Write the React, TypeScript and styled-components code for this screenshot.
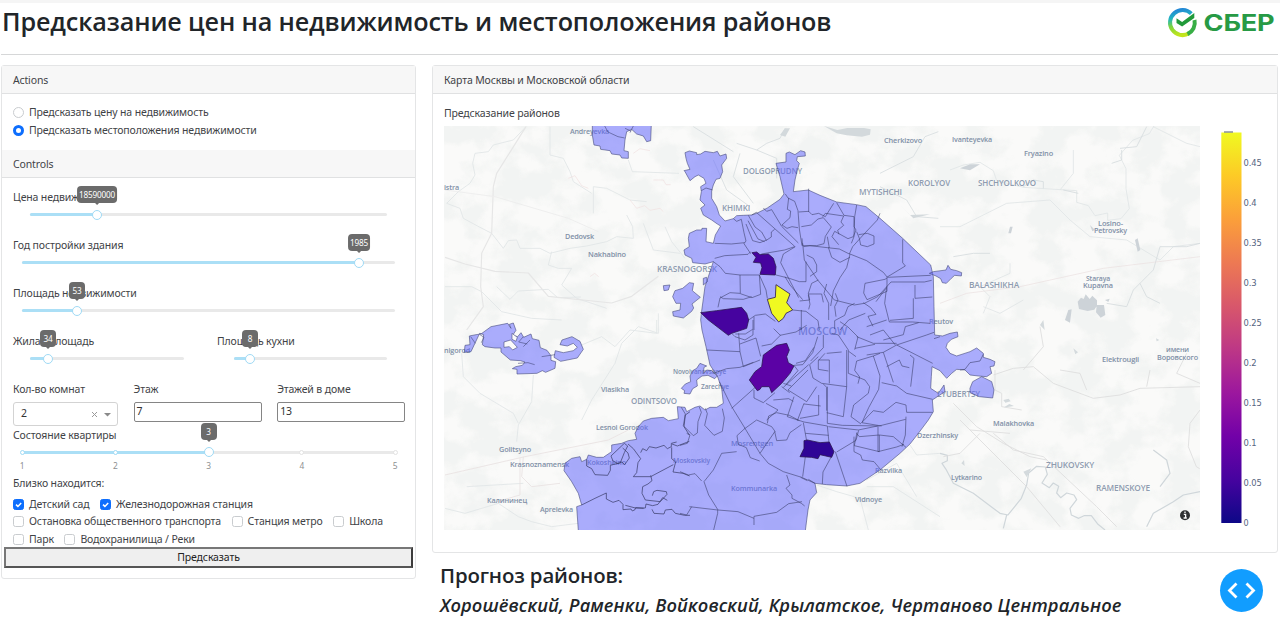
import React from 'react';
import styled, { createGlobalStyle } from 'styled-components';

const GlobalStyle = createGlobalStyle`
  * { box-sizing: border-box; }
  body {
    margin: 0;
    background: #fff;
    color: #3f4347;
    font: 400 10.5px/17px "Noto Sans", "Open Sans", sans-serif;
    letter-spacing: -0.14px;
    overflow: hidden;
  }
  button, input { font: inherit; color: inherit; letter-spacing: inherit; }
`;

const Page = styled.div`
  height: 631px;
  padding: 0 2px 0 1px;
  border-top: 3px solid #f5f5f5;
  display: flex;
  flex-direction: column;
`;
const TopBar = styled.header`
  height: 51.5px;
  flex: none;
  display: flex;
  justify-content: space-between;
  border-bottom: 1px solid #d6d7d8;
`;
const Title = styled.h1`
  margin: 0 0 0 1px;
  color: #212529;
  font-family: "Open Sans", sans-serif;
  font-size: 25.2px;
  font-weight: 600;
  line-height: 37px;
  white-space: nowrap;
`;
const Columns = styled.main`
  display: grid;
  grid-template-columns: 415px 1fr;
  column-gap: 16px;
  padding-top: 10.5px;
`;
const Card = styled.section<{ $h: number }>`
  height: ${p => p.$h}px;
  border: 1px solid #e4e5e6;
  border-radius: 3px;
  background: #fff;
`;
const CardHead = styled.div<{ $flush?: boolean }>`
  height: 28px;
  padding: 6px 11px 4px;
  background: #f7f7f7;
  border-bottom: 1px solid #e0e1e2;
  ${p => p.$flush && 'margin-top: 11px;'}
`;
const Radios = styled.div`
  padding: 10px 11px 0;
`;
const Option = styled.label`
  display: flex;
  align-items: center;
  gap: 5px;
  height: 17.5px;
  white-space: nowrap;
`;
const Radio = styled.span<{ $on?: boolean }>`
  width: 11px;
  height: 11px;
  border-radius: 50%;
  border: ${p => (p.$on ? '3.5px solid #0d6efd' : '1px solid #c9cccf')};
  background: #fff;
`;
const Check = styled.span<{ $on?: boolean }>`
  width: 11px;
  height: 11px;
  display: grid;
  place-items: center;
  border-radius: 2.5px;
  border: 1px solid ${p => (p.$on ? '#0d6efd' : '#c9cccf')};
  background: ${p => (p.$on ? '#0d6efd' : '#fff')};
`;
const Controls = styled.div`
  padding: 11px 11px 0;
`;
const Field = styled.div<{ $h?: number }>`
  height: ${p => p.$h ?? 48}px;
`;
const Pair = styled.div`
  display: grid;
  grid-template-columns: 204px 1fr;
`;
const Rail = styled.div<{ $inset: number; $right?: number }>`
  position: relative;
  height: 3px;
  margin: 7px ${p => p.$right ?? p.$inset}px 0 ${p => p.$inset}px;
  border-radius: 2px;
  background: #e9e9e9;
`;
const Track = styled.div`
  height: 3px;
  border-radius: 2px;
  background: #abdff6;
`;
const Handle = styled.span`
  position: absolute;
  top: -3.5px;
  width: 10px;
  height: 10px;
  margin-left: -5px;
  border: 1.6px solid #9fdaf5;
  border-radius: 50%;
  background: #fff;
`;
const Tip = styled.span`
  position: absolute;
  bottom: 13.5px;
  transform: translateX(-50%);
  min-width: 16px;
  height: 17px;
  padding: 0 2px;
  border-radius: 4px;
  background: #6b6b6b;
  color: #fff;
  font-size: 8.2px;
  line-height: 17px;
  letter-spacing: -0.2px;
  text-align: center;
  &::after {
    content: '';
    position: absolute;
    left: 50%;
    bottom: -2px;
    margin-left: -3px;
    border: 3px solid transparent;
    border-top-color: #6b6b6b;
    border-bottom: 0;
  }
`;
const Dot = styled.span<{ $on: boolean }>`
  position: absolute;
  top: -1px;
  width: 5px;
  height: 5px;
  margin-left: -2.5px;
  border-radius: 50%;
  border: 1px solid ${p => (p.$on ? '#9fdaf5' : '#e2e2e2')};
  background: #fff;
`;
const Mark = styled.span`
  position: absolute;
  top: 6px;
  transform: translateX(-50%);
  color: #8d8f91;
  font-size: 8.4px;
`;
const Inputs = styled.div`
  display: grid;
  grid-template-columns: 105px 128px 128px;
  column-gap: 15.6px;
  height: 46px;
`;
const Box = styled.div<{ $select?: boolean }>`
  display: flex;
  align-items: center;
  justify-content: space-between;
  height: ${p => (p.$select ? 24 : 20.5)}px;
  margin-top: 4px;
  padding: 0 ${p => (p.$select ? '6px 0 7px' : '2px')};
  border: 1px solid ${p => (p.$select ? '#d3d3d3' : '#858585')};
  border-radius: ${p => (p.$select ? 3 : 2)}px;
  color: #333;
`;
const Checks = styled.div`
  padding-top: 4px;
`;
const CheckRow = styled.div`
  display: flex;
  gap: 10.5px;
`;
const Submit = styled.button`
  display: block;
  width: 409px;
  height: 20.5px;
  margin: -1px 2px 0;
  padding: 0;
  border: 2px solid;
  border-color: #777 #3c3c3c #555 #777;
  background: #efefef;
  color: #222;
  line-height: 17px;
`;
const MapBody = styled.div`
  padding: 11px 0 0 11px;
`;
const ChartRow = styled.div`
  display: flex;
  margin-top: 4px;
  svg { display: block; }
`;
const Footer = styled.footer`
  display: flex;
  justify-content: space-between;
  padding: 10px 15px 0 8px;
  color: #212529;
  font-family: "Open Sans", sans-serif;
  white-space: nowrap;
`;
const Forecast = styled.h2`
  margin: 0;
  font-size: 20.4px;
  font-weight: 600;
  line-height: 24px;
`;
const Districts = styled.p`
  margin: 5px 0 0;
  font-size: 18.3px;
  letter-spacing: 0.1px;
  font-style: italic;
  font-weight: 600;
  line-height: 26px;
`;
const CodeButton = styled.button`
  width: 43px;
  height: 43px;
  margin-top: 6px;
  padding: 0;
  border: 0;
  border-radius: 50%;
  background: #119dff;
  svg { display: block; }
`;

function Slider({ inset, right, at, value }: { inset: number; right?: number; at: number; value: string }) {
  return (
    <Rail $inset={inset} $right={right}>
      <Track style={{ width: at }} />
      <Handle style={{ left: at }} />
      <Tip style={{ left: at }}>{value}</Tip>
    </Rail>
  );
}

function CheckItem({ label, on }: { label: string; on?: boolean }) {
  return (
    <Option>
      <Check $on={on}>
        {on && (
          <svg width="9" height="9" viewBox="0 0 9 9" fill="none" stroke="#fff" strokeWidth="1.5">
            <path d="M2 4.6 3.9 6.4 7.2 2.9" />
          </svg>
        )}
      </Check>
      <span>{label}</span>
    </Option>
  );
}

function Logo() {
  return (
    <svg width="112" height="44" viewBox="1166.5 3.5 112 44">
      <defs>
        <linearGradient id="ring" x1=".3" y1="0" x2=".45" y2="1">
          <stop offset="0" stopColor="#2389d6" />
          <stop offset=".3" stopColor="#20b5c0" />
          <stop offset=".62" stopColor="#7ed53c" />
          <stop offset="1" stopColor="#c3e51c" />
        </linearGradient>
      </defs>
      <path d="M1191.8 14.2A12.5 12.5 0 1 0 1189.5 33.8" fill="none" stroke="url(#ring)" strokeWidth="4" />
      <path d="M1195 20.5A12.5 12.5 0 0 1 1188 34.6" fill="none" stroke="#38ae45" strokeWidth="4" />
      <path d="M1177 18.8v4.6l5.6 3.6 12.2-8.6v-4.8l-12.2 8.8z" fill="#219a3a" />
      <text x="1204" y="31.5" textLength="71" lengthAdjust="spacingAndGlyphs" fontFamily="Inter, sans-serif" fontWeight="700" fontSize="22.5" fill="#279a45">СБЕР</text>
    </svg>
  );
}

type Label = [string, number, number, number, number?];
const LABELS: Label[] = [
  ['Andreyevka', 570, 134, 39], ['istra', 444, 190, 15], ['Dedovsk', 565, 239, 29], ['Nakhabino', 588, 256.5, 38],
  ['KRASNOGORSK', 657, 272, 60, 8], ['DOLGOPRUDNY', 743, 174, 59, 8], ['KHIMKI', 722, 210.5, 28, 8],
  ['Cherkizovo', 884, 143, 38], ['MYTISHCHI', 859, 195, 43, 8], ['KOROLYOV', 908, 186, 42, 8],
  ['Ivanteyevka', 952, 141.5, 40], ['Fryazino', 1024, 156, 29], ['SHCHYOLKOVO', 978, 186, 58, 8],
  ['Losino-', 1098, 226, 25], ['Petrovsky', 1094, 232.5, 33], ['BALASHIKHA', 969, 288, 50, 8],
  ['Staraya', 1086, 281, 24], ['Kupavna', 1083, 288, 30], ['Reutov', 929, 324, 24],
  ['имени', 1166, 352, 23], ['Воровского', 1157, 359.5, 41], ['Elektrougli', 1102, 362, 37],
  ['nigorod', 444, 352.5, 26], ['Novoivanovskoye', 673, 373.5, 53], ['Zarechye', 701, 388.5, 28],
  ['Vlasikha', 601, 392, 28], ['ODINTSOVO', 631, 403.5, 46, 8], ['Lesnoi Gorodok', 596, 430, 52],
  ['Golitsyno', 499, 452, 32], ['Krasnoznamensk', 510, 467, 59], ['Kokoshkino', 587, 465, 39],
  ['Moskovskiy', 673, 463, 37], ['Mosrentgen', 731, 446, 42], ['Kommunarka', 731, 490.5, 46],
  ['Калининец', 487, 502.5, 40], ['Aprelevka', 540, 512, 33], ['Vidnoye', 855, 502, 27],
  ['Razvilka', 875, 473, 27], ['Dzerzhinsky', 917, 438, 41], ['LYUBERTSY', 937, 397, 43, 8],
  ['Malakhovka', 993, 425.5, 41], ['Lytkarino', 951, 480, 31], ['ZHUKOVSKY', 1046, 467.5, 48, 8],
  ['RAMENSKOYE', 1096, 490.5, 54, 8], ['MOSCOW', 798, 335, 49, 10.5],
];

// The map is drawn in six sheets, each at three units to the pixel.
const NW = 'translate(430 120) scale(.33333)';
const N = 'translate(680 120) scale(.33333)';
const NE = 'translate(940 120) scale(.33333)';
const SW = 'translate(430 320) scale(.33333)';
const S = 'translate(680 320) scale(.33333)';
const SE = 'translate(940 320) scale(.33333)';

const CITY =
  'M100 370L106 345 122 318 112 312 95 300 70 285 62 265 75 255 60 240 64 215 62 200 78 190 72 175 55 165 45 170 30 182 15 155 12 152 30 148 22 130 18 115 15 98 28 93 50 98 50 104 62 102 75 94 100 98 112 94 120 108 138 102 140 115 125 135 128 155 120 175 108 178 100 195 95 212 95 235 110 260 118 285 135 303 160 296 170 287 190 286 215 285 230 280 262 264 300 238 312 222 300 170 288 130 318 126 318 100 328 96 345 104 362 92 375 96 376 108 352 110 350 122 358 130 352 150 345 180 340 215 385 210 420 226 470 246 530 254 558 260 600 295 668 355 752 435 760 470 762 560 764 645 788 648 810 640 832 636 834 650 814 658 802 670 798 682 810 700 830 708 870 695 890 684 910 700 910 712 930 718 945 725 942 738 930 740 935 760 920 770 895 768 870 765 855 750 830 748 815 760 800 775 780 752 756 740 754 770 752 805 775 820 792 795 795 815 775 828 757 840 760 875 745 900 715 940 690 972 660 1000 600 1050 540 1090 500 1098 440 1094 405 1090 410 1118 390 1140 384 1170 376 1232 -305 1232 -310 1160 -295 1155 -305 1120 -325 1085 -348 1052 -345 1030 -325 1015 -300 1010 -295 1025 -280 1018 -275 1005 -250 1012 -230 1012 -205 995 -205 975 -175 970 -155 962 -130 958 -135 940 -125 920 -110 903 -85 895 -50 892 -35 902 -5 896 -8 860 15 862 20 875 30 870 45 862 60 858 75 870 90 862 110 862 130 850 125 805 118 785 112 768 95 752 80 750 70 760 72 742 80 738 60 730 50 745 38 752 30 768 32 785 16 792 4 805 14 812 12 820 30 822 38 806 52 798 50 780 66 768 84 766 104 776 112 768 90 735 78 680 66 630 62 600 64 580 75 500 95 440 100 425 75 432 38 428 35 415 15 405 12 390 28 380 25 355 28 340 50 330 65 330 66 325 80 325 78 365Z';

const LINES_N =
  'M104 370l50 2 40-4M104 415l30-8 70-4 8-8M64 212l14-8 20 6M160 296l10 8 14-6 8 40 6 25-6 8 20 30M205 286l20 35 20 15 14 25 15-10 0-15 10-8M198 312l20 50 22 6 20-8M215 285l14-8 115 102M250 264l10 10 15-5 30 50 50 50M254 365l-20-8-30-55M344 380l-30 10-70 12M316 222l8 12 20 10 10 28 4 55 8 50M326 234l-4 34 10 5-2 20-24 22 15 10 15-5 18 3M386 276V206M356 276l30-2 10 10 20-4 20 10 25-40M364 320l30-5 20-18 16-4 24 28-18 28-4 22-22 6-42 0-2-22M428 290l8-10 55 8-8 18 8 10-18 15 4 12M530 255l-6 35-2 60-8 20M470 248l22 38 30 4 0 30 6 10-8 20-16 6-40-22-8 16 20 24M600 280l-8 20-38 40-36 40-10 22M530 335l8 20 4 20 20 5 20-8 0-24-20-8-26 4M668 358l0 70 8 10-56 34M510 402l50 20 50 35 12 15 130-6M368 370l5 50 40 60 50 60 60 15 30-5 40-20 40-44 100 0 22-5M346 380l-36 22-8 26 28 55 26 50M370 380l20-3 52 6 36 4 32 16-10 40-20 30-20 40-8 45M445 382l10 30 25 15 30-15M442 350l6 34M380 405l20 10 10 20 0 20-20 14M415 480l-20 10-10 30 4 20-30 3M180 465l58 0 4 58-26 10-35-12zM238 465l20 45 4 25M288 465l40 10 30 10 20 0 0-60M315 470l15 25 38 44M100 425l20 15 16 20 44 5M180 520l-30-2-30 16-6 28M120 530l10 6 60 2 25-8M206 600l20-14 30-4 30 22M338 570l40 4 36 28 4 28M385 525l5 28-4 15M440 492l-8 28 14 30 0 50M466 520l8 20-10 20 4 30M385 522l40 0 5 25M555 490l60-12 6-4 0 40-60 25-10-20zM524 550l-20 10-10 26-30 16 0 25M550 548l22 15 16 20-24 6 15 30M588 545l30-40M620 500l-6 50 14 56 70 0 52 4M705 495l0 40 52-4M700 535l0 60-70 6M560 620l60-20M480 630l26-30 50-20M364 570l0 60M222 630l0-40';
const LINES_S =
  'M118 185l37 75 40 65 45 75 25 30 45 25 55 17 40 18M80 90l100 5M176 40l4 55 10 45 50-20M180 72l48-18 14 55M155 40l10 10 30 10 24-15 0-45M100 160l40-14 40-4 40-15M166 42l30 0 22-14M245 78l30-6 26-26-20-20M300 46l48-10 32-20M342 136l26-2 30-36 15-48M348 130l28-8 26-40M342 136l12 16-35 40M430 45l0 38-38 40M455 40l20 5 30 45 0 70 50 20 14 20-4 20-44 35-8 35 30 22M500 90l0 110-10 90-50-12M440 100l45-4M415 120l33 0 0 70M435 100l-20 22 0 26 30 5M415 110l-26 24 10 40 26 16 75 10M386 134l-76 68M384 150l-60 60 56 35 30-45M342 230l-20 60 50 16 70 12M372 250l-20 52M442 200l0 110 45 6 110 2 80-20M442 318l6 60M430 192l10 10 0 70M416 225l0 60-56 10M372 252l50 6M240 400l45-66-10-14-45-20-36 26M284 334l6 28 30-2 10-22 34-24M195 325l-24 22 4 26 24 10 12 30 28 10M155 265l72-64M222 210l0 24 28 14 35-30M258 250l36 20-34 30M280 240l46-4 14 8M262 310l4-22 24-10 38 8 30 16M305 200l24 18M310 190l24 8M445 320l90 10 58-12M370 308l10 55M376 340l70 6M470 396l58-35 8-30M530 340l8 10 60-5 0 50-75-18 8-40M598 345l42 5 38 32M594 320l0 75 56-14 22-8M678 290l-2 55-10 35M545 308l35-36 30 5 38-30 30 8 2 22 78 0M545 308l60 10M600 100l-20 8-50 15-6 28 15 20-5 20M528 110l-22-16M560 105l50-8 40-22 108 55M580 108l20 60-4 40-30 55-20 45M605 188l45 10 30 22 78 18M610 97l30 90M690 105l12 10-10 85M620 140l38-20 8 18 22 5M480 5l24 16 30 30-10 38M530 50l50 20 70 0M650 75l90-30 22-8M570 45l40-15 36 45M610 60l60-16 6-24 40-12M525 85l60-12M466 395l35 104M427 492l2-36 30-55M368 470l8-60M522 350l0 45 20 10 5 15 35 5 20 24M362 472l20 10M405 490l-20-12M320 465l10 30-12 10 18 20 0 10 28 15 10 8M366 545l-40 6-36 26-68 12 0 26M170 395l-45 5-25 50-28 35 14 40 28 45 60 5 48 20M0 455l25 10 20-4 20 22M28 560l85 10 0 10-12 50M0 580l20 5 15-25M76 265l6 16-8 35 28 30 25-12 6-40-6-28M4 262l12 20-6 35 30 30 12-8 2-34 10-28-6-16M20 340l10 5-8 25-22 6';
const LINES_SW =
  'M470 418l0 20 15 8 10 18 38 2 8-15 0-15 30-8 12-30 10-20-10-8-40 38 6 15 15 8 12-5 8 8 14-20-4-15-16-15M455 555l40-20 34-16 0 18 20 10 18-6 12 12 0 16 24-2 4 6 8-4 2-6 24 2M594 372l16 14 22 30-8 12-4 30-10 12 52 0 68-36M632 398l6-12 12 6 8-12 20 4 24-8 10 10 12-6 0-10 16-4M725 382l0 34 12 10-8 30 30 4 20 8M662 466l4 16-12 10-16 8-2 20 10 20 45 5 20-22-2-8-28-4-10 4-4 12M586 556l30 8 30 0 2-12 20 5 16-4 14-20 14 8M666 568l6 12 30 2 4-12 20-2 10 12 28 6 16 0M726 372l16 6 36-14M780 275l-14 10-4 35 16 25';

function MoscowMap() {
  return (
    <svg width="756" height="404" viewBox="444 126 756 404">
      <defs>
        <filter id="woods" x="0" y="0" width="100%" height="100%" colorInterpolationFilters="sRGB">
          <feTurbulence type="fractalNoise" baseFrequency=".03 .035" numOctaves="4" seed="8" />
          <feColorMatrix values="0 0 0 0 .945  0 0 0 0 .953  0 0 0 0 .948  5 0 0 0 -2" />
        </filter>
      </defs>
      <rect x="444" y="126" width="756" height="404" fill="#fafaf9" />
      <rect x="444" y="126" width="756" height="404" filter="url(#woods)" opacity=".8" />

      <g fill="none" stroke="#e1e5e7" strokeWidth="2.6" strokeLinejoin="round">
        <g transform={NW}>
          <path d="M288 20L250 60 190 75 175 95 135 100 128 130 135 165 120 190 85 215 50 250 90 265 100 295 150 322 185 340 220 385 235 362 260 360 270 385 330 385 360 400 420 385 470 378 530 365 560 350 610 355 608 320 590 285M200 500l40 38 25-25 90-5 28 25 70-2M365 395l-10 40 30 10 40 0-30 50 45 40 90 30M490 280l0-80 40 5 70 35 50 5M360 20l0 85 40 10 20 40 10 30 55 35M595 120l12 35 140 5M640 310l30 80 80 10M705 320l20 45 40 50M45 500l80 0 30 15 60 60 90 20 90 5" />
          <path stroke="#e6e6e6" strokeWidth="3.5" d="M288 20L200 160 190 200 185 340 155 400 152 500 160 560 110 630M45 412l60 20 90 22 100 5 60 70 190 20 60-20 80-60" />
          <path stroke="#ececec" d="M45 210l150 20 220 65 90 40" />
          <path stroke="#f0dfe0" strokeWidth="2" d="M600 240l20 25 24-8 16 14 30-6 10 10M610 100l20-14 30 6M415 175l20-8 20 30 20 8M480 470l14-10 12 10M670 180l30 0 8 14 14 0" />
        </g>
        <g transform={N}>
          <path stroke="#d8dde0" d="M170 70l60 20 30-20 40-15 15-30M230 90l60 25 0 60M600 160l100-50 35-60 40-15M600 200l80 40 30 50 65 5M100 120l40 90 70 50M180 100l-20 70 60 80M40 20l120 75" />
          <path fill="#d3d9dc" stroke="none" d="M300 45l15-20 15 0-14 25zM432 18l40 12 30-6 50 0 20 4-2 16-24 6-46-4-30-6zM655 250l35 35 60-2-50 12z" />
        </g>
        <g transform={NE}>
          <path d="M30 150l40-15 50-8 40 25 10 30 80 20 80 5 80 5 0 35 35 10 20 30 38-8 0 22 40-5 25-30-10-60 0-60-20-40 40-45 50-20 30-50M0 320l60 0 60-30 80-40 130-10 60 60 60 50 110 10 100 60 40-40 80-10M130 580l20-50-30-30 90-40 0-30M130 560l50 20 70-40M400 90l0 70-40 50M640 20l100 50 40 10" />
          <path stroke="#d7dcdf" d="M620 20l-30 60-50 5M370 210l45 10M515 130l30-10 0-30M780 370l-40 10-80 0-20 70-60 60-20 50-60-10M600 490l20 40 40 20M250 200l30-20 30 5 0 20M40 410l60-10 50 0" />
          <path fill="#cdd3d8" stroke="none" d="M60 145l30-12 30 0-30 18zM205 340l5-20 8 0-5 20zM585 360l8-5 8 35-8 5zM450 315l15 15-8 4zM413 545l10-12 8 4 6-14 12 14 8-10 14 14 0 16-8 12-20 4-26-6zM470 555l22 0 4 30-14 8-14-16zM375 600l10-30 10-2-5 40zM495 540l14-4-4 10z" />
          <path stroke="#eadfdf" strokeWidth="2" d="M0 550l80-30 160-20 250-55 290-35" />
        </g>
        <g transform={SW}>
          <path d="M95 100l5 70 50 50 100 60 15 30M310 165l-5 80-40 70-5 50M455 300l30-60 70-110 20-60 50-50 60 20 0-60M45 565l60 15 100-30 60 40 40 15 60 15 80-10M110 500l170-10M680 0l0 40-80-10-45 50-40-30-60 25" />
          <path stroke="#e9e2e2" d="M45 465l240-55 250-50 60-30M280 410l-5 60 30 30 85-10M200 545l70-20 0-110" />
        </g>
        <g transform={S}>
          <path d="M410 495l60 20 70 20 25 95M560 500l80 0 140 90M690 375l20 30 70-5M560 480l90-50 60 100" />
        </g>
        <g transform={SE}>
          <path stroke="#cfd6da" strokeWidth="3.6" d="M0 400l22 6 0 16-16 8 12 18 22 42 60 30 80 60 24 5 40-50 16-40 6-36 24-20 26 2 6 22-16 26 22 14 12-14 16 10-6 20 12 14 18-14 22 6 8 14-20 26 4 20 22 10 16-8 22 0 20 26 20 16 0 32M200 585l-10 40M640 390l40 30 10 40-30 40M620 620l20-40 60-35 30-20 50-10" />
          <path stroke="#ddd" d="M160 165l60-20 60-5 60 50 120 45 80-10 60-20 180-5M40 250l70 70 80 50 80 40 50 10M90 330l120 10M60 300l200 200 100 120M165 150l0 60 20 10 0 40 60 10M780 270l-30 40-5 70 24 60 10 6M160 340l60 50 90 20 160 150 60 60M120 340l-60 60-50 10M300 20l10 60-60 70M360 150l60 10 20 50M620 200l10-50M740 100l-30 60 70 30" />
          <path fill="#d4dadd" stroke="none" d="M250 455l24-10-14 26zM64 430l8-10 2 18zM300 15l10-15 4 30zM648 55l10 5-8 4zM400 85l14 12-8 6zM190 240l16-4 6 8-16 4zM192 262l16-10 14 6-24 4z" />
        </g>
      </g>

      <g fill="#8190a7" fontFamily='"Open Sans", sans-serif' fontWeight="600">
        {LABELS.map(([text, x, y, w, size]) => (
          <text key={text} x={x} y={y} textLength={w} lengthAdjust="spacingAndGlyphs" fontSize={size ?? 7.2} fillOpacity={size ? 0.9 : 1}>{text}</text>
        ))}
      </g>

      <g fill="#5a5eff" fillOpacity=".5" stroke="#444a7c" strokeWidth="2.4" strokeOpacity=".75" strokeLinejoin="round">
        <path transform={N} d={CITY} />
        <g transform={NW}>
          <path d="M487 12l0 33 5 30 18 3 2 10 28 4 5 10 25 3 5 9 20 1 0-20-13-3 3-32 5-25 15-7 15 14 20 6 10 17 12-3 2-50z" />
          <path fill="none" d="M524 18l10 18 30 14 20 4M585 25l18 8M610 18l-10 20" />
          <path d="M778 488l-20 17-23 7-7 18 10 20 14 0-2 20-22 5 2 13 30 6 25-20 6-10-5-12 25-20-24-20 4-22zM700 497l20-2-5 15-13 2z" />
        </g>
        <path transform={N} d="M70 475l10-3 2 13-12 10zM748 460l12-5 38-5 6-14 8 12 18 4 15 6-1 10-20-2-10 9-15 15-12-2-5-12-14-8z" />
        <g transform={SW}>
          <path d="M105 76l15-2-2-26 20-4 15-2 30-22 50-10 10 15-5-12 12-4 8 22-10 15 15 4 10-12 8 14 22-10 4 14 20 5 4 22 20 8 12 16 0 14 14 4-2 20-28 12-10-5-16 8-60 2 0-14-14-2 10-6 20-4 8-10-14-4-30-2-28-24 0-12-18 0-30-4-8-6 4-30-12-4-26 55-20 2z" />
          <path fill="#fafafa" fillOpacity="1" d="M222 66l20-6 20 22-14 8-10-10-16 2zM246 40l16 12-4 12-12-6z" />
          <path d="M390 74l6-14 30-10 24 14 10 24-18 26-50 10-20-12 4-20 24 6 30-6 12-10-12-12-18 8z" />
          <path fill="none" d="M335 110l40-6M150 44l12 8-8 16M264 130l30-2 20 6M122 50l14 20M280 50l-14 16 26 6M300 60l-20 20" />
        </g>
        <path transform={SE} d="M90 205l8-20 27-15 30 15 7 25-4 24-40-4-28-12z" />
      </g>

      <g fill="none" stroke="#32365f" strokeWidth="2.4" strokeOpacity=".68" strokeLinejoin="round">
        <path transform={N} d={LINES_N} />
        <path transform={S} d={LINES_S} />
        <path transform={SW} d={LINES_SW} strokeWidth="3" />
        <path transform={SE} d="M0 50l-18 6M60 150l15-2 15-20 30-5 10-20" />
      </g>

      <g stroke="#2a164f" strokeWidth="2.4" strokeLinejoin="round">
        <g transform={N}>
          <path fill="#46039f" d="M216 398l14-2 10 8 25-2 15 13 8 25-2 25-46-2 6-20-4-14-22-2 8-15z" />
          <path fill="#f0f921" d="M288 494l42 28-10 26 18 22-20 10-8 15-14 11-21-26-13-42 24-6z" />
          <path fill="#46039f" d="M62 578l48-6 75-10 15 18 6 20-6 25-45 15-10 6-60-46z" />
        </g>
        <g transform={S}>
          <path fill="#5b02a5" d="M290 76l30-6 8 20-8 20 5 18 17 10-12 22-25 30-30 28-7-18-23 0-5 8-8 4-24-32 17-25 20-15 5-35z" />
          <path fill="#2f0596" d="M372 362l10-2 38 8 28-2 14 29-7 17-35-8-6 12-20-4-34-2 12-25z" />
        </g>
      </g>

      <circle cx="1185" cy="515.2" r="5" fill="#2f3133" />
      <path d="M1183.8 514.3h1.8v3.6M1183.6 518h3.2M1185 511.6v1.4" fill="none" stroke="#fff" strokeWidth="1.3" />
    </svg>
  );
}

const TICKS = ['0', '0.05', '0.1', '0.15', '0.2', '0.25', '0.3', '0.35', '0.4', '0.45'];
const PLASMA = ['#0d0887', '#46039f', '#7201a8', '#9c179e', '#bd3786', '#d8576b', '#ed7953', '#fb9f3a', '#fdca26', '#f0f921'];

function ColorBar() {
  return (
    <svg width="75" height="404" viewBox="1200 126 75 404">
      <defs>
        <linearGradient id="plasma" x1="0" y1="1" x2="0" y2="0">
          {PLASMA.map((c, i) => <stop key={c} offset={i / 9} stopColor={c} />)}
        </linearGradient>
      </defs>
      <rect x="1221.3" y="132.5" width="20.2" height="390.5" fill="url(#plasma)" />
      <path d="M1224 132h9" stroke="#6b7488" strokeWidth="1.2" />
      <g fill="#56647f" fontFamily='"DejaVu Sans", "Open Sans", sans-serif' fontSize="8.4">
        {TICKS.map((t, i) => (
          <text key={t} x="1243.6" y={526 - i * 39.95} textLength={t.length === 1 ? 5 : t.length === 3 ? 13 : 18} lengthAdjust="spacingAndGlyphs">{t}</text>
        ))}
      </g>
    </svg>
  );
}

export default function App() {
  return (
    <Page>
      <GlobalStyle />
      <TopBar>
        <Title>Предсказание цен на недвижимость и местоположения районов</Title>
        <Logo />
      </TopBar>
      <Columns>
        <Card $h={514}>
          <CardHead>Actions</CardHead>
          <Radios>
            <Option><Radio /><span>Предсказать цену на недвижимость</span></Option>
            <Option><Radio $on /><span>Предсказать местоположения недвижимости</span></Option>
          </Radios>
          <CardHead $flush>Controls</CardHead>
          <Controls>
            <Field>Цена недвижимости<Slider inset={17} at={67} value="18590000" /></Field>
            <Field>Год постройки здания<Slider inset={9} at={337} value="1985" /></Field>
            <Field>Площадь недвижимости<Slider inset={9} at={55} value="53" /></Field>
            <Pair>
              <Field $h={47.5}>Жилая площадь<Slider inset={17} right={33} at={18} value="34" /></Field>
              <Field $h={47.5}>Площадь кухни<Slider inset={17} at={16} value="8" /></Field>
            </Pair>
            <Inputs>
              <div>
                Кол-во комнат
                <Box $select>
                  <span>2</span>
                  <svg width="20" height="10" viewBox="0 0 20 10">
                    <path d="M1 3l5 5M6 3L1 8" stroke="#999" fill="none" />
                    <path d="M13 4h7l-3.5 3.5z" fill="#8a8a8a" />
                  </svg>
                </Box>
              </div>
              <div>Этаж<Box>7</Box></div>
              <div>Этажей в доме<Box>13</Box></div>
            </Inputs>
            <Field>
              Состояние квартиры
              <Rail $inset={9}>
                <Track style={{ width: '50%' }} />
                {[1, 2, 3, 4, 5].map(n => (
                  <React.Fragment key={n}>
                    <Dot $on={n < 4} style={{ left: `${(n - 1) * 25}%` }} />
                    <Mark style={{ left: `${(n - 1) * 25}%` }}>{n}</Mark>
                  </React.Fragment>
                ))}
                <Handle style={{ left: '50%' }} />
                <Tip style={{ left: '50%' }}>3</Tip>
              </Rail>
            </Field>
            <div>Близко находится:</div>
            <Checks>
              <CheckRow><CheckItem on label="Детский сад" /><CheckItem on label="Железнодорожная станция" /></CheckRow>
              <CheckRow><CheckItem label="Остановка общественного транспорта" /><CheckItem label="Станция метро" /><CheckItem label="Школа" /></CheckRow>
              <CheckRow><CheckItem label="Парк" /><CheckItem label="Водохранилища / Реки" /></CheckRow>
            </Checks>
          </Controls>
          <Submit>Предсказать</Submit>
        </Card>
        <div>
          <Card $h={488}>
            <CardHead>Карта Москвы и Московской области</CardHead>
            <MapBody>
              <div>Предсказание районов</div>
              <ChartRow><MoscowMap /><ColorBar /></ChartRow>
            </MapBody>
          </Card>
          <Footer>
            <div>
              <Forecast>Прогноз районов:</Forecast>
              <Districts>Хорошёвский, Раменки, Войковский, Крылатское, Чертаново Центральное</Districts>
            </div>
            <CodeButton aria-label="Debug">
              <svg width="43" height="43" viewBox="0 0 43 43" fill="none" stroke="#fff" strokeWidth="2.8">
                <path d="M16.5 14.5L9.5 21.5l7 7M26.5 14.5l7 7-7 7" />
              </svg>
            </CodeButton>
          </Footer>
        </div>
      </Columns>
    </Page>
  );
}
